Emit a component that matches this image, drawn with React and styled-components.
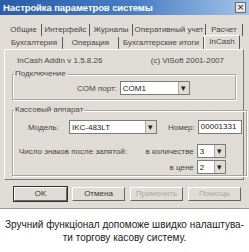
import styled, { createGlobalStyle } from "styled-components";

const Global = createGlobalStyle`
  html, body { margin: 0; padding: 0; background: #fff; }
  body { width: 249px; height: 252px; overflow: hidden; font-family: "Liberation Sans", Arial, sans-serif; }
`;

export default function App() {
  return (
    <Page>
      <Global />
      <Window>
        <TitleBar>
          <TitleText>Настройка параметров системы</TitleText>
          <CloseBtn>×</CloseBtn>
        </TitleBar>
        <Tabs>
          <TabRow>
            <Tab w={36}>Общие</Tab>
            <Tab w={48}>Интерфейс</Tab>
            <Tab w={43}>Журналы</Tab>
            <Tab w={73}>Оперативный учет</Tab>
            <Tab w={37}>Расчет</Tab>
          </TabRow>
          <TabRow>
            <Tab w={57}>Бухгалтерия</Tab>
            <Tab w={56}>Операция</Tab>
            <Tab w={85}>Бухгалтерские итоги</Tab>
            <Tab w={36} active>InCash</Tab>
          </TabRow>
        </Tabs>
        <Panel>
          <InfoRow>
            <span>InCash AddIn v 1.5.8.26</span>
            <span>(c) ViSoft 2001-2007</span>
          </InfoRow>
          <Group h={31} top={2}>
            <Legend>Подключение</Legend>
            <FieldRow indent={60}>
              <Label>COM порт:</Label>
              <Select w={70}>COM1<Arrow>▾</Arrow></Select>
            </FieldRow>
          </Group>
          <Group h={71} top={5}>
            <Legend>Кассовый аппарат</Legend>
            <FieldRow indent={11}>
              <Label>Модель:</Label>
              <Select w={88} space={7}>IKC-483LT<Arrow>▾</Arrow></Select>
              <Label space={8}>Номер:</Label>
              <Input>00001331</Input>
            </FieldRow>
            <DigitsGrid>
              <DigitsText>Число знаков после запятой:</DigitsText>
              <RightLabel>в количестве</RightLabel>
              <Select w={29}>3<Arrow>▾</Arrow></Select>
              <RightLabel>в цене</RightLabel>
              <Select w={29}>2<Arrow>▾</Arrow></Select>
            </DigitsGrid>
          </Group>
        </Panel>
        <Buttons>
          <Button focused>OK</Button>
          <Button>Отмена</Button>
          <Button disabled>Применить</Button>
          <Button disabled>Помощь</Button>
        </Buttons>
      </Window>
      <Caption>
        <Line>Зручний функціонал допоможе швидко налаштува-</Line>
        <Line>ти торгову касову систему.</Line>
      </Caption>
    </Page>
  );
}

const Page = styled.div`
  width: 249px;
  height: 252px;
  display: flex;
  flex-direction: column;
`;

const Window = styled.div`
  background: #dfdcd6;
  height: 209px;
  box-sizing: border-box;
  display: flex;
  flex-direction: column;
  border-bottom: 1px solid #9a9893;
  font-size: 8px;
  color: #454545;
`;

const TitleBar = styled.div`
  height: 15px;
  background: linear-gradient(to right, #2a5caa, #4a7fc4 55%, #a4c4e8);
  display: flex;
  align-items: center;
  justify-content: space-between;
  padding: 0 3px 0 3px;
`;

const TitleText = styled.span`
  color: #fff;
  font-size: 9.5px;
  font-weight: bold;
  letter-spacing: -0.1px;
`;

const CloseBtn = styled.span`
  width: 9px;
  height: 9px;
  background: #e8e6e0;
  border: 1px solid #6e6c68;
  font-size: 11px;
  line-height: 8px;
  text-align: center;
  color: #222;
`;

const Tabs = styled.div`
  padding: 9px 0 0 6px;
  display: flex;
  flex-direction: column;
`;

const TabRow = styled.div`
  display: flex;
  height: 12px;
  align-items: stretch;
  & + & { margin-top: 1px; }
`;

const Tab = styled.div`
  width: ${(p) => p.w}px;
  box-sizing: border-box;
  text-align: center;
  border-right: 1px solid #5a5a5a;
  line-height: 12px;
  white-space: nowrap;
  ${(p) =>
    p.active &&
    `
    border-left: 1px solid #fff;
    border-top: 1px solid #fff;
    margin-top: -2px;
    height: 15px;
    line-height: 12px;
    background: #dfdcd6;
  `}
`;

const Panel = styled.div`
  margin: 0 5px 0 4px;
  height: 131px;
  box-sizing: border-box;
  border: 1px solid #fbfaf8;
  border-right-color: #7a7874;
  border-bottom-color: #7a7874;
  padding: 5px 7px 0 7px;
  display: flex;
  flex-direction: column;
  gap: 3px;
`;

const InfoRow = styled.div`
  display: flex;
  justify-content: space-between;
  padding: 0 12px 0 5px;
  line-height: 11px;
`;

const Group = styled.fieldset`
  margin: 0;
  padding: ${(p) => p.top}px 4px 0 4px;
  height: ${(p) => p.h}px;
  box-sizing: border-box;
  border: 1px solid #a9a6a0;
  box-shadow: inset 1px 1px 0 #fff, 1px 1px 0 #fff;
  display: flex;
  flex-direction: column;
  gap: 5px;
  & + & { margin-top: 2px; }
`;

const Legend = styled.legend`
  padding: 0 1px;
  margin-left: -3px;
  line-height: 10px;
`;

const FieldRow = styled.div`
  display: flex;
  align-items: center;
  padding-left: ${(p) => p.indent || 0}px;
  gap: 3px;
`;

const Label = styled.span`
  margin-left: ${(p) => p.space || 0}px;
`;

const Select = styled.div`
  width: ${(p) => p.w}px;
  height: 14px;
  margin-left: ${(p) => p.space || 0}px;
  box-sizing: border-box;
  background: #fff;
  border: 1px solid #7d7b77;
  display: flex;
  align-items: center;
  justify-content: space-between;
  padding-left: 2px;
  color: #222;
`;

const Arrow = styled.span`
  width: 10px;
  height: 12px;
  background: #e0ddd6;
  border-left: 1px solid #aaa;
  font-size: 9px;
  line-height: 12px;
  text-align: center;
`;

const Input = styled.div`
  width: 44px;
  height: 14px;
  box-sizing: border-box;
  background: #fff;
  border: 1px solid #7d7b77;
  padding-left: 2px;
  line-height: 12px;
  color: #222;
`;

const DigitsGrid = styled.div`
  display: grid;
  grid-template-columns: 1fr auto 29px;
  column-gap: 3px;
  row-gap: 2px;
  align-items: center;
  padding-left: 2px;
  margin-top: 5px;
  margin-right: 16px;
`;

const DigitsText = styled.span`
  grid-row: 1;
  grid-column: 1;
`;

const RightLabel = styled.span`
  grid-column: 2;
  text-align: right;
`;

const Buttons = styled.div`
  display: flex;
  gap: 5px;
  padding: 7px 0 0 14px;
`;

const Button = styled.div`
  width: 53px;
  height: 14px;
  box-sizing: border-box;
  border: 1px solid #fff;
  border-right-color: #666;
  border-bottom-color: #666;
  box-shadow: ${(p) => (p.focused ? "0 0 0 1px #333" : "none")};
  text-align: center;
  line-height: 12px;
  color: ${(p) => (p.disabled ? "#aaa8a4" : "#333")};
`;

const Caption = styled.div`
  flex: 1;
  background: #fff;
  padding-top: 9px;
  color: #1a1a1a;
  font-size: 10px;
  line-height: 13px;
`;

const Line = styled.div`
  text-align: center;
  white-space: nowrap;
`;
